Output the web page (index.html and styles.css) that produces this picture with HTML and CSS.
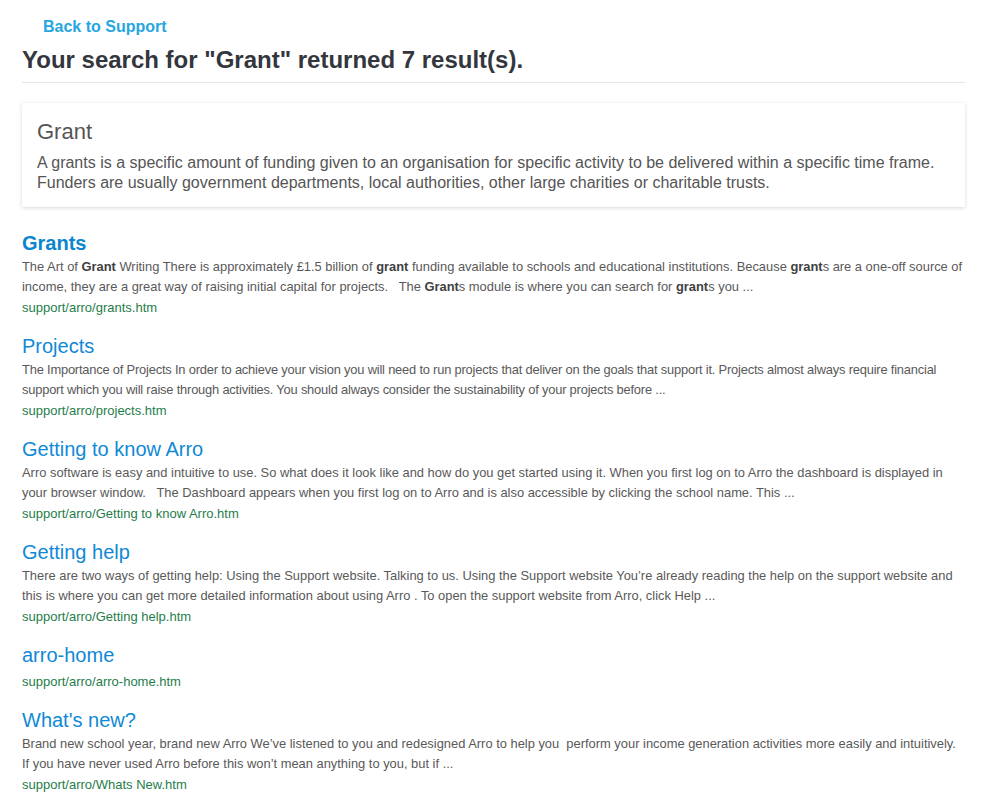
FILE: index.html
```html
<!DOCTYPE html>
<html lang="en">
<head>
<meta charset="utf-8">
<title>Search results</title>
<link rel="stylesheet" href="styles.css">
</head>
<body>
<div class="page">
  <a class="back" href="#">Back to Support</a>
  <h1 class="heading">Your search for "Grant" returned 7 result(s).</h1>
  <hr class="rule">
  <div class="card">
    <h2 class="card-title">Grant</h2>
    <p class="card-text">A grants is a specific amount of funding given to an organisation for specific activity to be delivered within a specific time frame. Funders are usually government departments, local authorities, other large charities or charitable trusts.</p>
  </div>
  <div class="results">
    <div class="result">
      <a class="result-title strong" href="#">Grants</a>
      <p class="snippet">The Art of <b>Grant</b> Writing There is approximately £1.5 billion of <b>grant</b> funding available to schools and educational institutions. Because <b>grant</b>s are a one-off source of income, they are a great way of raising initial capital for projects.&nbsp;&nbsp; The <b>Grant</b>s module is where you can search for <b>grant</b>s you ...</p>
      <div class="url">support/arro/grants.htm</div>
    </div>
    <div class="result">
      <a class="result-title" href="#">Projects</a>
      <p class="snippet tight">The Importance of Projects In order to achieve your vision you will need to run projects that deliver on the goals that support it. Projects almost always require financial support which you will raise through activities. You should always consider the sustainability of your projects before ...</p>
      <div class="url">support/arro/projects.htm</div>
    </div>
    <div class="result">
      <a class="result-title" href="#">Getting to know Arro</a>
      <p class="snippet">Arro software is easy and intuitive to use. So what does it look like and how do you get started using it. When you first log on to Arro the dashboard is displayed in your browser window.&nbsp;&nbsp; The Dashboard appears when you first log on to Arro and is also accessible by clicking the school name. This ...</p>
      <div class="url">support/arro/Getting to know Arro.htm</div>
    </div>
    <div class="result">
      <a class="result-title" href="#">Getting help</a>
      <p class="snippet">There are two ways of getting help: Using the Support website. Talking to us. Using the Support website You’re already reading the help on the support website and this is where you can get more detailed information about using Arro . To open the support website from Arro, click Help ...</p>
      <div class="url">support/arro/Getting help.htm</div>
    </div>
    <div class="result">
      <a class="result-title" href="#">arro-home</a>
      <p class="snippet empty"></p>
      <div class="url">support/arro/arro-home.htm</div>
    </div>
    <div class="result">
      <a class="result-title" href="#">What's new?</a>
      <p class="snippet">Brand new school year, brand new Arro We’ve listened to you and redesigned Arro to help you&nbsp; perform your income generation activities more easily and intuitively. If you have never used Arro before this won’t mean anything to you, but if ...</p>
      <div class="url">support/arro/Whats New.htm</div>
    </div>
  </div>
</div>
</body>
</html>
```

FILE: styles.css
```css
html, body {
  margin: 0;
  padding: 0;
  background: #ffffff;
}

body {
  font-family: "Liberation Sans", Arial, sans-serif;
  color: #555555;
}

.page {
  width: 943px;
  padding: 17px 0 0 22px;
  display: flex;
  flex-direction: column;
}

.back {
  align-self: flex-start;
  margin-left: 21px;
  font-size: 16px;
  line-height: 20px;
  font-weight: bold;
  color: #27a6df;
  text-decoration: none;
}

.heading {
  margin: 9px 0 0;
  font-size: 24px;
  line-height: 28px;
  font-weight: bold;
  color: #33363d;
}

.rule {
  margin: 8px 0 0;
  border: 0;
  border-top: 1px solid #e6e6e6;
  height: 0;
}

.card {
  margin-top: 20px;
  padding: 16px 15px 14px;
  background: #ffffff;
  box-shadow: 0 1px 4px rgba(0, 0, 0, 0.16);
}

.card-title {
  margin: 0;
  font-size: 22px;
  line-height: 26px;
  font-weight: normal;
  color: #555555;
}

.card-text {
  margin: 8px 0 0;
  font-size: 16px;
  line-height: 20px;
  color: #555555;
}

.results {
  margin-top: 24px;
  display: flex;
  flex-direction: column;
  gap: 16px;
}

.result {
  display: flex;
  flex-direction: column;
  align-items: flex-start;
}

.result-title {
  font-size: 20px;
  line-height: 24px;
  color: #1089d6;
  text-decoration: none;
  margin-bottom: 2px;
}

.result-title.strong {
  font-weight: bold;
  color: #0a85cf;
}

.snippet {
  margin: 0;
  font-size: 12.9px;
  line-height: 20px;
  color: #595959;
}

.snippet.tight {
  letter-spacing: -0.2px;
}

.snippet b {
  color: #3f3f3f;
}

.snippet.empty {
  height: 2px;
}

.url {
  margin-top: 1px;
  font-size: 13px;
  line-height: 20px;
  color: #1f7d4b;
}
```
